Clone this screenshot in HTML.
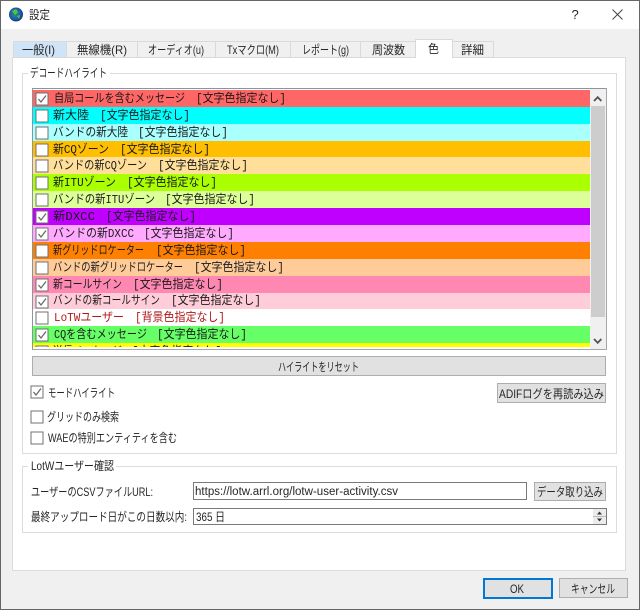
<!DOCTYPE html>
<html lang="ja">
<head>
<meta charset="utf-8">
<title>設定</title>
<style>
html,body{margin:0;padding:0;background:#f0f0f0;width:640px;height:610px;overflow:hidden}
svg{display:block;filter:blur(.3px)}
text{font-family:"Liberation Sans","Noto Sans CJK JP",sans-serif;font-size:12px;fill:#262626}
.r text{font-family:"Liberation Mono","Noto Sans CJK JP",monospace;font-size:12px;fill:#1a1a1a}
.r text.red{fill:#b01818}
.b{fill:#e1e1e1;stroke:#adadad}
.cb{fill:#fff;stroke:#707070}
.ck{fill:none;stroke:#6a6a6a;stroke-width:1.3}
.g{fill:none;stroke:#dcdcdc}
</style>
</head>
<body>
<svg width="640" height="610" viewBox="0 0 640 610" xmlns="http://www.w3.org/2000/svg">
<defs>
<radialGradient id="gl" cx="45%" cy="45%" r="60%"><stop offset="0" stop-color="#2f9a5a"/><stop offset=".6" stop-color="#1c5fb0"/><stop offset="1" stop-color="#1a2f80"/></radialGradient>
<clipPath id="lc"><rect x="33" y="89" width="557" height="258"/></clipPath>
</defs>
<rect width="640" height="610" fill="#f0f0f0"/>
<rect width="640" height="29" fill="#fff"/>
<circle cx="16" cy="14.5" r="7" fill="url(#gl)"/>
<path d="M12 11l4-2 2 3-3 3zM17 16l3-1-1 4z" fill="#58c040"/>
<text x="29" y="19" textLength="21" lengthAdjust="spacingAndGlyphs">設定</text>
<text x="571.5" y="19" style="font-size:13px">?</text>
<path d="M612.5 9.5l10 10M622.5 9.5l-10 10" stroke="#444" stroke-width="1" fill="none"/>

<!-- pane -->
<rect x="12.5" y="57.5" width="613" height="513" fill="#fff" stroke="#dcdcdc"/>
<!-- tabs -->
<g fill="#f0f0f0" stroke="#d9d9d9">
<rect x="13.5" y="41.5" width="53" height="16" fill="#cfe4f6"/>
<rect x="66.5" y="41.5" width="71" height="16"/>
<rect x="137.5" y="41.5" width="78" height="16"/>
<rect x="215.5" y="41.5" width="75" height="16"/>
<rect x="290.5" y="41.5" width="70" height="16"/>
<rect x="360.5" y="41.5" width="55" height="16"/>
<rect x="452.5" y="41.5" width="41" height="16"/>
</g>
<path d="M415.5 58V39.5h37V58" fill="#fff" stroke="#d9d9d9"/>
<text x="22" y="54" textLength="33" lengthAdjust="spacingAndGlyphs">一般(I)</text>
<text x="77" y="54" textLength="50" lengthAdjust="spacingAndGlyphs">無線機(R)</text>
<text x="148" y="54" textLength="56" lengthAdjust="spacingAndGlyphs">オーディオ(u)</text>
<text x="227" y="54" textLength="52" lengthAdjust="spacingAndGlyphs">Txマクロ(M)</text>
<text x="302" y="54" textLength="47" lengthAdjust="spacingAndGlyphs">レポート(g)</text>
<text x="372" y="54" textLength="33" lengthAdjust="spacingAndGlyphs">周波数</text>
<text x="428" y="53" textLength="11" lengthAdjust="spacingAndGlyphs">色</text>
<text x="461" y="54" textLength="23" lengthAdjust="spacingAndGlyphs">詳細</text>

<!-- group 1 -->
<rect class="g" x="22.5" y="73.5" width="594" height="380"/>
<rect x="28" y="68" width="82" height="11" fill="#fff"/>
<text x="30" y="77" textLength="77" lengthAdjust="spacingAndGlyphs">デコードハイライト</text>

<!-- list -->
<rect x="32.5" y="88.5" width="574" height="261" fill="#fff" stroke="#a3a8ad"/>
<path d="M32.5 350V88.5H606" fill="none" stroke="#8a959f"/>
<g clip-path="url(#lc)">
<rect x="33" y="90" width="557" height="17" fill="#ff6666"/>
<rect x="33" y="107" width="557" height="17" fill="#00ffff"/>
<rect x="33" y="124" width="557" height="17" fill="#aaffff"/>
<rect x="33" y="141" width="557" height="16" fill="#ffbf00"/>
<rect x="33" y="157" width="557" height="17" fill="#ffdf99"/>
<rect x="33" y="174" width="557" height="17" fill="#aaff00"/>
<rect x="33" y="191" width="557" height="17" fill="#ddff99"/>
<rect x="33" y="208" width="557" height="17" fill="#bf00ff"/>
<rect x="33" y="225" width="557" height="17" fill="#ffaaff"/>
<rect x="33" y="242" width="557" height="17" fill="#ff8000"/>
<rect x="33" y="259" width="557" height="17" fill="#ffcc99"/>
<rect x="33" y="276" width="557" height="17" fill="#ff88b3"/>
<rect x="33" y="293" width="557" height="16" fill="#ffccd9"/>
<rect x="33" y="309" width="557" height="17" fill="#ffffff"/>
<rect x="33" y="326" width="557" height="17" fill="#66ff66"/>
<rect x="33" y="343" width="557" height="4" fill="#ffff00"/>

<g class="cb">
<rect x="36" y="93" width="12" height="12"/>
<rect x="36" y="110" width="12" height="12"/>
<rect x="36" y="127" width="12" height="12"/>
<rect x="36" y="144" width="12" height="12"/>
<rect x="36" y="160" width="12" height="12"/>
<rect x="36" y="177" width="12" height="12"/>
<rect x="36" y="194" width="12" height="12"/>
<rect x="36" y="211" width="12" height="12"/>
<rect x="36" y="228" width="12" height="12"/>
<rect x="36" y="245" width="12" height="12"/>
<rect x="36" y="262" width="12" height="12"/>
<rect x="36" y="279" width="12" height="12"/>
<rect x="36" y="296" width="12" height="12"/>
<rect x="36" y="312" width="12" height="12"/>
<rect x="36" y="329" width="12" height="12"/>
<rect x="36" y="346" width="12" height="12"/>
</g>
<path class="ck" d="M38.5 99l2.5 3 5-6.5"/>
<path class="ck" d="M38.5 217l2.5 3 5-6.5"/>
<path class="ck" d="M38.5 234l2.5 3 5-6.5"/>
<path class="ck" d="M38.5 285l2.5 3 5-6.5"/>
<path class="ck" d="M38.5 302l2.5 3 5-6.5"/>
<path class="ck" d="M38.5 335l2.5 3 5-6.5"/>

<g class="r">
<text x="54" y="102" textLength="131" lengthAdjust="spacingAndGlyphs">自局コールを含むメッセージ</text><text x="196" y="102" textLength="90" lengthAdjust="spacingAndGlyphs">[文字色指定なし]</text>
<text x="53" y="119" textLength="36" lengthAdjust="spacingAndGlyphs">新大陸</text><text x="100" y="119" textLength="90" lengthAdjust="spacingAndGlyphs">[文字色指定なし]</text>
<text x="53" y="136" textLength="75" lengthAdjust="spacingAndGlyphs">バンドの新大陸</text><text x="138" y="136" textLength="90" lengthAdjust="spacingAndGlyphs">[文字色指定なし]</text>
<text x="53" y="153" textLength="56" lengthAdjust="spacingAndGlyphs">新CQゾーン</text><text x="120" y="153" textLength="90" lengthAdjust="spacingAndGlyphs">[文字色指定なし]</text>
<text x="53" y="169" textLength="94" lengthAdjust="spacingAndGlyphs">バンドの新CQゾーン</text><text x="158" y="169" textLength="90" lengthAdjust="spacingAndGlyphs">[文字色指定なし]</text>
<text x="53" y="186" textLength="63" lengthAdjust="spacingAndGlyphs">新ITUゾーン</text><text x="127" y="186" textLength="90" lengthAdjust="spacingAndGlyphs">[文字色指定なし]</text>
<text x="53" y="203" textLength="102" lengthAdjust="spacingAndGlyphs">バンドの新ITUゾーン</text><text x="165" y="203" textLength="90" lengthAdjust="spacingAndGlyphs">[文字色指定なし]</text>
<text x="53" y="220" textLength="42" lengthAdjust="spacingAndGlyphs">新DXCC</text><text x="106" y="220" textLength="90" lengthAdjust="spacingAndGlyphs">[文字色指定なし]</text>
<text x="53" y="237" textLength="81" lengthAdjust="spacingAndGlyphs">バンドの新DXCC</text><text x="144" y="237" textLength="90" lengthAdjust="spacingAndGlyphs">[文字色指定なし]</text>
<text x="53" y="254" textLength="91" lengthAdjust="spacingAndGlyphs">新グリッドロケーター</text><text x="156" y="254" textLength="90" lengthAdjust="spacingAndGlyphs">[文字色指定なし]</text>
<text x="53" y="271" textLength="130" lengthAdjust="spacingAndGlyphs">バンドの新グリッドロケーター</text><text x="194" y="271" textLength="90" lengthAdjust="spacingAndGlyphs">[文字色指定なし]</text>
<text x="53" y="288" textLength="69" lengthAdjust="spacingAndGlyphs">新コールサイン</text><text x="133" y="288" textLength="90" lengthAdjust="spacingAndGlyphs">[文字色指定なし]</text>
<text x="53" y="304" textLength="107" lengthAdjust="spacingAndGlyphs">バンドの新コールサイン</text><text x="171" y="304" textLength="90" lengthAdjust="spacingAndGlyphs">[文字色指定なし]</text>
<text class="red" x="54" y="321" textLength="70" lengthAdjust="spacingAndGlyphs">LoTWユーザー</text><text class="red" x="135" y="321" textLength="90" lengthAdjust="spacingAndGlyphs">[背景色指定なし]</text>
<text x="54" y="338" textLength="93" lengthAdjust="spacingAndGlyphs">CQを含むメッセージ</text><text x="157" y="338" textLength="90" lengthAdjust="spacingAndGlyphs">[文字色指定なし]</text>
<text x="53" y="355" textLength="69" lengthAdjust="spacingAndGlyphs">送信メッセージ</text><text x="132" y="355" textLength="90" lengthAdjust="spacingAndGlyphs">[文字色指定なし]</text>
</g>
</g>

<!-- scrollbar -->
<rect x="590" y="89" width="16" height="260" fill="#f0f0f0"/>
<rect x="591" y="106" width="14" height="211" fill="#cdcdcd"/>
<path d="M594 101l3.7-3.8 3.7 3.8" fill="none" stroke="#555" stroke-width="1.8"/>
<path d="M594 339l3.7 3.8 3.7-3.8" fill="none" stroke="#555" stroke-width="1.8"/>

<!-- reset button -->
<rect class="b" x="32.5" y="356.5" width="573" height="19"/>
<text x="278" y="371" textLength="81" lengthAdjust="spacingAndGlyphs">ハイライトをリセット</text>

<!-- options -->
<rect class="cb" x="31" y="386" width="12" height="12" stroke="#555"/>
<path class="ck" d="M33.5 392l2.5 3 5-6.5"/>
<text x="48" y="397" textLength="67" lengthAdjust="spacingAndGlyphs">モードハイライト</text>
<rect class="b" x="497.5" y="383.5" width="108" height="19"/>
<text x="499" y="398" textLength="105" lengthAdjust="spacingAndGlyphs">ADIFログを再読み込み</text>
<rect class="cb" x="31" y="411" width="12" height="12" stroke="#555"/>
<text x="47" y="421" textLength="72" lengthAdjust="spacingAndGlyphs">グリッドのみ検索</text>
<rect class="cb" x="31" y="432" width="12" height="12" stroke="#555"/>
<text x="48" y="442" textLength="129" lengthAdjust="spacingAndGlyphs">WAEの特別エンティティを含む</text>

<!-- group 2 -->
<rect class="g" x="22.5" y="466.5" width="594" height="66"/>
<rect x="28" y="460" width="88" height="12" fill="#fff"/>
<text x="31" y="470" textLength="83" lengthAdjust="spacingAndGlyphs">LotWユーザー確認</text>
<text x="31" y="496" textLength="122" lengthAdjust="spacingAndGlyphs">ユーザーのCSVファイルURL:</text>
<text x="31" y="521" textLength="156" lengthAdjust="spacingAndGlyphs">最終アップロード日がこの日数以内:</text>
<rect x="193.5" y="482.5" width="333" height="17" fill="#fff" stroke="#7a7a7a"/>
<text x="195" y="495" textLength="203" lengthAdjust="spacingAndGlyphs" style="font-size:11.5px">https://lotw.arrl.org/lotw-user-activity.csv</text>
<rect class="b" x="534.5" y="482.5" width="71" height="18"/>
<text x="537" y="496" textLength="66" lengthAdjust="spacingAndGlyphs">データ取り込み</text>
<rect x="193.5" y="508.5" width="413" height="16" fill="#fff" stroke="#7a7a7a"/>
<text x="196" y="521" textLength="29" lengthAdjust="spacingAndGlyphs">365 日</text>
<rect x="593" y="509" width="13" height="15" fill="#ececec"/>
<path d="M593 516.5h13" stroke="#bbb"/>
<path d="M597 514.5l2.5-3 2.5 3zM597 518.5l2.5 3 2.5-3z" fill="#333"/>

<!-- bottom buttons -->
<rect x="484" y="579" width="68" height="19" fill="#e1e1e1" stroke="#0078d7" stroke-width="2"/>
<text x="510" y="593" textLength="14" lengthAdjust="spacingAndGlyphs">OK</text>
<rect class="b" x="559.5" y="578.5" width="68" height="19"/>
<text x="571" y="593" textLength="44" lengthAdjust="spacingAndGlyphs">キャンセル</text>

<!-- window border -->
<rect x="0.5" y="0.5" width="639" height="609" fill="none" stroke="#666"/>
</svg>
</body>
</html>
